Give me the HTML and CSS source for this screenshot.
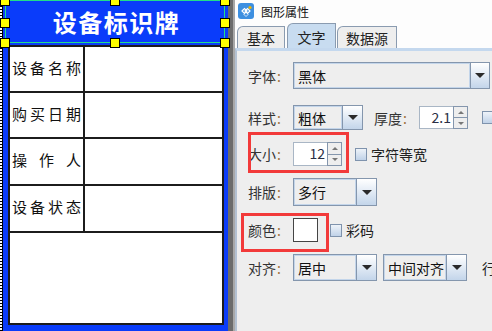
FILE: index.html
```html
<!DOCTYPE html>
<html>
<head>
<meta charset="utf-8">
<link rel="stylesheet" href="styles.css">
</head>
<body>
<div class="app">
  <div class="canvas">
    <div class="ruler"></div>
    <div class="label">
      <div class="label-title">设备标识牌</div>
      <div class="table">
        <div class="cell key"><span>设</span><span>备</span><span>名</span><span>称</span></div>
        <div class="cell"></div>
        <div class="cell key"><span>购</span><span>买</span><span>日</span><span>期</span></div>
        <div class="cell"></div>
        <div class="cell key"><span>操</span><span>作</span><span>人</span></div>
        <div class="cell"></div>
        <div class="cell key"><span>设</span><span>备</span><span>状</span><span>态</span></div>
        <div class="cell"></div>
        <div class="cell wide"></div>
      </div>
    </div>
    <div class="selection"></div>
    <div class="handle h-l h-t"></div>
    <div class="handle h-c h-t"></div>
    <div class="handle h-r h-t"></div>
    <div class="handle h-l h-m"></div>
    <div class="handle h-r h-m"></div>
    <div class="handle h-l h-b"></div>
    <div class="handle h-c h-b"></div>
    <div class="handle h-r h-b"></div>
  </div>
  <div class="sep"></div>
  <div class="dialog">
    <div class="titlebar">
      <svg class="app-icon" width="16" height="16" viewBox="0 0 16 16">
        <rect x="0" y="0" width="16" height="16" rx="3" fill="#3d8fe0"/>
        <path d="M4 8 L6.5 5.5 L9 8 L6.5 10.5 Z" fill="none" stroke="#fff" stroke-width="1.2"/>
        <path d="M7 8 L9.5 5.5 L12 8 L9.5 10.5 Z" fill="none" stroke="#fff" stroke-width="1.2"/>
        <path d="M5.5 11 L8 13.5 L10.5 11" fill="none" stroke="#dbe9fb" stroke-width="1"/>
        <circle cx="12" cy="4.5" r="1.6" fill="#f4b400"/>
      </svg>
      <span class="title-text">图形属性</span>
    </div>
    <div class="tabs">
      <div class="tab t1">基本</div>
      <div class="tab t2 active">文字</div>
      <div class="tab t3">数据源</div>
    </div>
    <div class="pane">
      <div class="form">
        <div class="row r1">
          <div class="lbl">字体<span class="colon">:</span></div>
          <div class="combo"><div class="field w178">黑体</div><div class="btn"><i class="tri"></i></div></div>
        </div>
        <div class="row r2">
          <div class="lbl">样式<span class="colon">:</span></div>
          <div class="combo"><div class="field w50">粗体</div><div class="btn"><i class="tri"></i></div></div>
          <div class="lbl lbl2">厚度<span class="colon">:</span></div>
          <div class="spinner"><div class="sfield">2.1</div><div class="sbtns"><div class="sb"><i class="up"></i></div><div class="sb"><i class="dn"></i></div></div></div>
          <div class="check cut"></div>
        </div>
        <div class="row r3">
          <div class="lbl">大小<span class="colon">:</span></div>
          <div class="spinner"><div class="sfield">12</div><div class="sbtns"><div class="sb"><i class="up"></i></div><div class="sb"><i class="dn"></i></div></div></div>
          <div class="check"></div>
          <span class="ctext">字符等宽</span>
          <div class="mark mark1"></div>
        </div>
        <div class="row r4">
          <div class="lbl">排版<span class="colon">:</span></div>
          <div class="combo"><div class="field w64">多行</div><div class="btn"><i class="tri"></i></div></div>
        </div>
        <div class="row r5">
          <div class="lbl">颜色<span class="colon">:</span></div>
          <div class="swatch"></div>
          <div class="check c5"></div>
          <span class="ctext">彩码</span>
          <div class="mark mark2"></div>
        </div>
        <div class="row r6">
          <div class="lbl">对齐<span class="colon">:</span></div>
          <div class="combo"><div class="field w64">居中</div><div class="btn"><i class="tri"></i></div></div>
          <div class="combo c2"><div class="field w64">中间对齐</div><div class="btn"><i class="tri"></i></div></div>
          <span class="ctext more">行</span>
        </div>
      </div>
    </div>
  </div>
</div>
</body>
</html>
```

FILE: styles.css
```css
* { box-sizing: border-box; }
html, body { margin: 0; padding: 0; }
body {
  width: 492px;
  height: 331px;
  overflow: hidden;
  font-family: "Noto Sans CJK SC", "DejaVu Sans", sans-serif;
  background: #eeeeee;
}
.app { display: flex; height: 331px; }

/* ---------- left canvas ---------- */
.canvas { width: 228px; height: 331px; display: flex; position: relative; flex: none; }
.ruler {
  width: 3px;
  border-right: 1px solid #000;
  background: repeating-linear-gradient(to bottom, #000 0 1px, #fff 1px 3px);
}
.label { flex: 1; background: #0a3cfa; display: flex; flex-direction: column; }
.label-title {
  height: 45px;
  color: #fff;
  font-weight: bold;
  font-size: 24px;
  letter-spacing: 1.5px;
  line-height: 44px;
  text-align: center;
  padding-left: 2px;
}
.table {
  margin-left: 5px;
  width: 216px;
  height: 280px;
  display: grid;
  grid-template-columns: 73px 1fr;
  grid-template-rows: 44px 44px 45px 45px 1fr;
  gap: 2px;
  background: #1c1c1c;
  border: 2px solid #1c1c1c;
}
.cell { background: #fff; }
.cell.wide { grid-column: 1 / 3; }
.cell.key {
  display: flex;
  justify-content: space-between;
  align-items: center;
  padding: 0 2px 4px 2px;
  font-size: 15px;
  color: #111;
}
.selection {
  position: absolute;
  left: 5px; top: 0;
  width: 220px; height: 43px;
  border: 1px solid #22dd88;
  pointer-events: none;
}
.handle {
  position: absolute;
  width: 10px; height: 10px;
  background: #ffff00;
  border: 1px solid #000;
}
.h-l { left: 0; }
.h-c { left: 110px; }
.h-r { left: 220px; }
.h-t { top: -4px; }
.h-m { top: 18px; }
.h-b { top: 38px; }

.sep {
  width: 7px; flex: none;
  background: linear-gradient(to right, #6c6c6c 0 5px, #a8a8a8 5px 7px);
}

/* ---------- dialog ---------- */
.dialog { flex: 1; display: flex; flex-direction: column; background: #fdfdfd; }
.titlebar { height: 22px; display: flex; align-items: center; padding-left: 3px; }
.app-icon { display: block; }
.title-text { margin-left: 7px; font-size: 12px; color: #111; }

.tabs { height: 26px; display: flex; align-items: flex-end; padding-left: 2px; }
.tab {
  height: 22px;
  border: 1px solid #8a9bb0;
  border-bottom: none;
  border-top-left-radius: 6px;
  background: #eeeeee;
  font-size: 14px;
  color: #222;
  display: flex; align-items: center; justify-content: center;
  padding-top: 1px;
}
.t1 { width: 48px; }
.t2 { width: 49px; margin-left: 2px; }
.t3 { width: 60px; margin-left: 1px; }
.tab.active { height: 25px; background: #c8dcf0; }

.pane {
  flex: 1;
  background: #eeeeee;
  border-top: 3px solid #c4d8ee;
  border-left: 2px solid #b3c1d2;
}
.form { padding: 11px 0 0 11px; display: flex; flex-direction: column; gap: 12px; }
.row { display: flex; align-items: center; position: relative; font-size: 14px; color: #333; }
.r1 { height: 27px; margin-bottom: 4px; }
.r2 { height: 25px; }
.r3 { height: 24px; }
.r4 { height: 28px; }
.r5 { height: 24px; }
.r6 { height: 27px; }

.lbl { width: 45px; flex: none; white-space: nowrap; color: #333; }
.colon { color: #a0703c; margin-left: 1px; }
.lbl2 { margin-left: 11px; }

.combo { display: flex; height: 100%; }
.field {
  height: 100%;
  border: 1px solid #8496ad;
  box-shadow: inset 0 0 0 1px #c3d5ea;
  background: #eeeeee;
  padding-left: 4px;
  display: flex; align-items: center;
  color: #111;
  font-size: 14px;
  white-space: nowrap;
}
.w178 { width: 178px; }
.w50 { width: 50px; }
.w64 { width: 64px; }
.btn {
  width: 20px; height: 100%;
  border: 1px solid #8496ad;
  border-left: none;
  background: linear-gradient(to bottom, #ffffff, #c3d5ea);
  display: flex; align-items: center; justify-content: center;
}
.r1 .btn { width: 19px; }
.tri {
  width: 0; height: 0;
  border-left: 5px solid transparent;
  border-right: 5px solid transparent;
  border-top: 5px solid #2a2a2a;
}
.c2 { margin-left: 6px; }

.spinner { display: flex; height: 23px; }
.r3 .spinner { height: 24px; }
.sfield {
  width: 34px; height: 100%;
  background: #fff;
  border: 1px solid #a9b6c5;
  border-right: none;
  text-align: right;
  padding-right: 2px;
  font-size: 14px;
  line-height: 21px;
  color: #2a2f45;
}
.sbtns { width: 15px; height: 100%; display: flex; flex-direction: column; border: 1px solid #8496ad; }
.sb { flex: 1; background: #eeeeee; display: flex; align-items: center; justify-content: center; }
.sb + .sb { border-top: 1px solid #8496ad; }
.up { width: 0; height: 0; border-left: 3px solid transparent; border-right: 3px solid transparent; border-bottom: 3px solid #777; }
.dn { width: 0; height: 0; border-left: 3px solid transparent; border-right: 3px solid transparent; border-top: 3px solid #777; }

.check {
  width: 12px; height: 13px; flex: none;
  border: 1px solid #7f93ad;
  background: linear-gradient(to bottom, #eef3f9, #c0d2e8);
}
.r2 .check { margin-left: 14px; width: 14px; }
.r3 .check { margin-left: 13px; }
.c5 { margin-left: 12px; }
.ctext { margin-left: 4px; color: #222; white-space: nowrap; }
.more { margin-left: 15px; }

.swatch { width: 25px; height: 24px; background: #fff; border: 1px solid #444; }

.mark { position: absolute; border: 3px solid #f23a3a; pointer-events: none; }
.mark1 { left: 0; top: -10px; width: 101px; height: 41px; }
.mark2 { left: -7px; top: -5px; width: 88px; height: 39px; }
```
